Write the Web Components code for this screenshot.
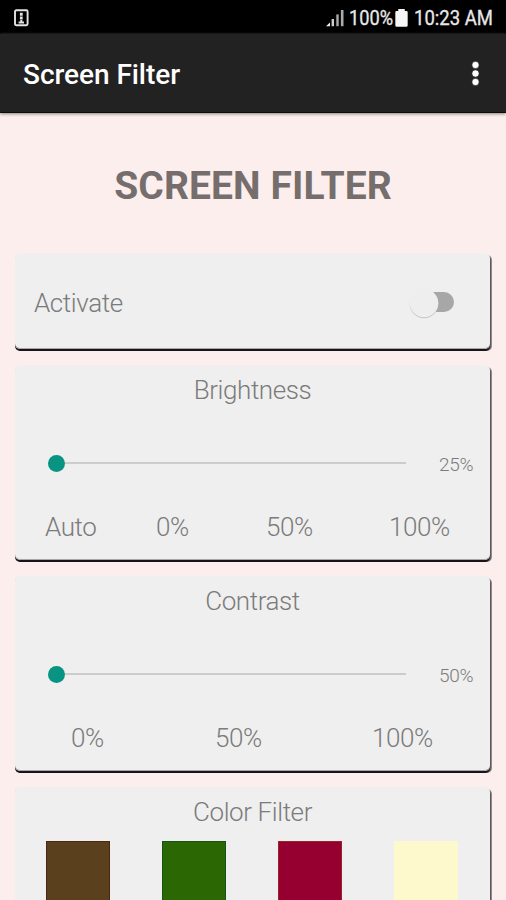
<!DOCTYPE html>
<html lang="en">
<head>
<meta charset="utf-8">
<title>Screen Filter</title>
<style>
html,body{margin:0;height:100%;overflow:hidden}
body{background:#fbeeed;font-family:Roboto,"Liberation Sans",sans-serif;color:#7b7b7b}
</style>
</head>
<body>
<filter-app></filter-app>
<script>
const define = (name, html, setup) => customElements.define(name, class extends HTMLElement {
  connectedCallback() {
    if (this.shadowRoot) return;
    const t = document.createElement('template');
    t.innerHTML = html;
    this.attachShadow({mode: 'open'}).append(t.content.cloneNode(true));
    if (setup) setup(this, this.shadowRoot);
  }
});

define('status-bar', `
<style>
:host{display:flex;align-items:center;height:34px;background:#000;color:#e8e8e8;padding:2px 13px 0 14px;box-sizing:border-box;font-size:20px;line-height:32px;white-space:nowrap}
.right{margin-left:auto;display:flex;align-items:center}
svg{display:block;flex:none}
.pct{width:46px;margin-left:5px}
.time{width:79px;margin-left:6px}
.fit{display:block;transform-origin:0 50%;width:max-content;-webkit-text-stroke:.3px #e8e8e8}
.pct .fit{transform:scaleX(.91)}
.time .fit{transform:scaleX(.925)}
</style>
<svg width="15" height="18" viewBox="0 0 15 18"><rect x="1" y="1.200" width="12.600" height="15" rx="1.200" fill="none" stroke="#e4e4e4" stroke-width="1.900"/><path d="M7.300 3.800v6.800" stroke="#e4e4e4" stroke-width="2.800" stroke-dasharray="3 .8"/><path d="M7.300 11v1.600M4.600 13.400h5.400" stroke="#e4e4e4" stroke-width="2"/></svg>
<div class="right">
<svg width="18" height="18" viewBox="0 0 18 18"><path d="M0 17.200L4 13.500v3.700z" fill="#eee"/><path d="M6.800 10v7.200" stroke="#ccc" stroke-width="2.400"/><path d="M11.500 5.400v11.800" stroke="#aaa" stroke-width="2.400"/><path d="M16.200 1v16.200" stroke="#aaa" stroke-width="2.600"/></svg>
<div class="pct"><span class="fit">100%</span></div>
<svg width="13" height="18" viewBox="0 0 12 18" preserveAspectRatio="none"><path d="M3 0h6v2h1.500q1.200 0 1.200 1.200v13q0 1.500-1.200 1.500h-9Q.3 17.700.3 16.200V3.200Q.3 2 1.500 2H3z" fill="#f6f6f6"/></svg>
<div class="time"><span class="fit">10:23 AM</span></div>
</div>`);

define('app-bar', `
<style>
:host{display:flex;align-items:center;justify-content:space-between;height:79px;padding:2px 26px 0 23px;box-sizing:border-box;background:#222;color:#fff;border-bottom:1px solid #0d0d0d;box-shadow:0 1px 3px #8c8080;font-size:28px;font-weight:500}
span{display:block;letter-spacing:-.05px;padding-top:1px}
svg{display:block}
</style>
<span><slot></slot></span>
<svg width="9" height="26" viewBox="0 0 9 26"><g fill="#fff" stroke="#0a0a0a" stroke-width=".7"><circle cx="4.500" cy="4" r="3.700"/><circle cx="4.500" cy="12.500" r="3.700"/><circle cx="4.500" cy="21" r="3.700"/></g></svg>`);

define('raised-card', `
<style>
:host{display:block;box-sizing:border-box;width:475px;background:#efefef;border-radius:5px;box-shadow:inset 0 -1px 0 #aaa6a7,0 2px 0 #181417,1px 2px 0 #5e585a,2px 2px 0 #928b8c}
</style><slot></slot>`);

define('toggle-switch', `
<style>
:host{display:block}svg{display:block}
</style>
<svg width="50" height="36" viewBox="0 0 50 36"><rect x="8" y="7" width="40" height="20" rx="10" fill="#a7a7a7"/><circle cx="18" cy="19" r="14.300" fill="#c6c6c6"/><circle cx="18" cy="18" r="14.300" fill="#eee"/></svg>`);

define('level-slider', `
<style>
:host{display:flex;align-items:center;height:20px;margin-left:33px}
i{width:17px;height:17px;border-radius:50%;background:#079483;flex:none}
hr{width:341px;height:2px;border:0;margin:0;background:#ccc;flex:none}
span{margin:3px 0 0 33px;font-size:19px;font-weight:300;letter-spacing:-.3px;line-height:20px}
</style><i></i><hr><span><slot></slot></span>`);

define('preset-row', `
<style>
:host{display:grid;font-size:26px;font-weight:300;line-height:30px;letter-spacing:-.4px;white-space:nowrap}
</style>`, (el, root) => {
  const items = el.getAttribute('items').split(',');
  el.style.gridTemplateColumns = el.getAttribute('columns');
  items.forEach(text => { const s = document.createElement('span'); s.textContent = text; root.append(s); });
});

define('color-swatch', `<style>:host{display:block;width:64px;height:64px;box-sizing:border-box;background:var(--fill);border:1px solid var(--edge)}</style>`);

define('filter-app', `
<style>
:host{display:block;width:506px;height:900px;overflow:hidden}
status-bar,app-bar{position:relative}
h1{margin:50px 0 0;height:46px;line-height:46px;text-align:center;font-size:39px;font-weight:700;letter-spacing:.1px;color:#756e6d}
main{display:flex;flex-direction:column;margin:44px 0 0 15px}
raised-card{height:195px;margin-bottom:16px}
.activate{display:flex;height:96px;align-items:center;justify-content:space-between;padding:3px 34px 0 19px;font-size:26px;font-weight:300;letter-spacing:-.4px}
.activate span{padding-top:1px}
h2{margin:0;padding-top:10px;height:30px;line-height:30px;text-align:center;font-size:26px;font-weight:300;letter-spacing:-.4px}
level-slider{margin-top:48px}
preset-row{margin-top:38px}
.swatches{display:flex;gap:52px;margin:14px 0 0 31px}
</style>
<status-bar></status-bar>
<app-bar>Screen Filter</app-bar>
<h1>SCREEN FILTER</h1>
<main>
<raised-card class="activate"><span>Activate</span><toggle-switch></toggle-switch></raised-card>
<raised-card><h2>Brightness</h2><level-slider>25%</level-slider><preset-row items="Auto,0%,50%,100%" columns="111px 110px 123px 70px" style="padding-left:30px;padding-top:1px"></preset-row></raised-card>
<raised-card><h2>Contrast</h2><level-slider>50%</level-slider><preset-row items="0%,50%,100%" columns="144px 157px 70px" style="padding-left:56px;padding-top:1px"></preset-row></raised-card>
<raised-card><h2>Color Filter</h2><div class="swatches">
<color-swatch style="--fill:#5a401d;--edge:#4d2510"></color-swatch>
<color-swatch style="--fill:#2b6803;--edge:#175217"></color-swatch>
<color-swatch style="--fill:#960031;--edge:#982425"></color-swatch>
<color-swatch style="--fill:#fdf9cd;--edge:#fdf9cd"></color-swatch></div></raised-card>
</main>`);
</script>
</body>
</html>
